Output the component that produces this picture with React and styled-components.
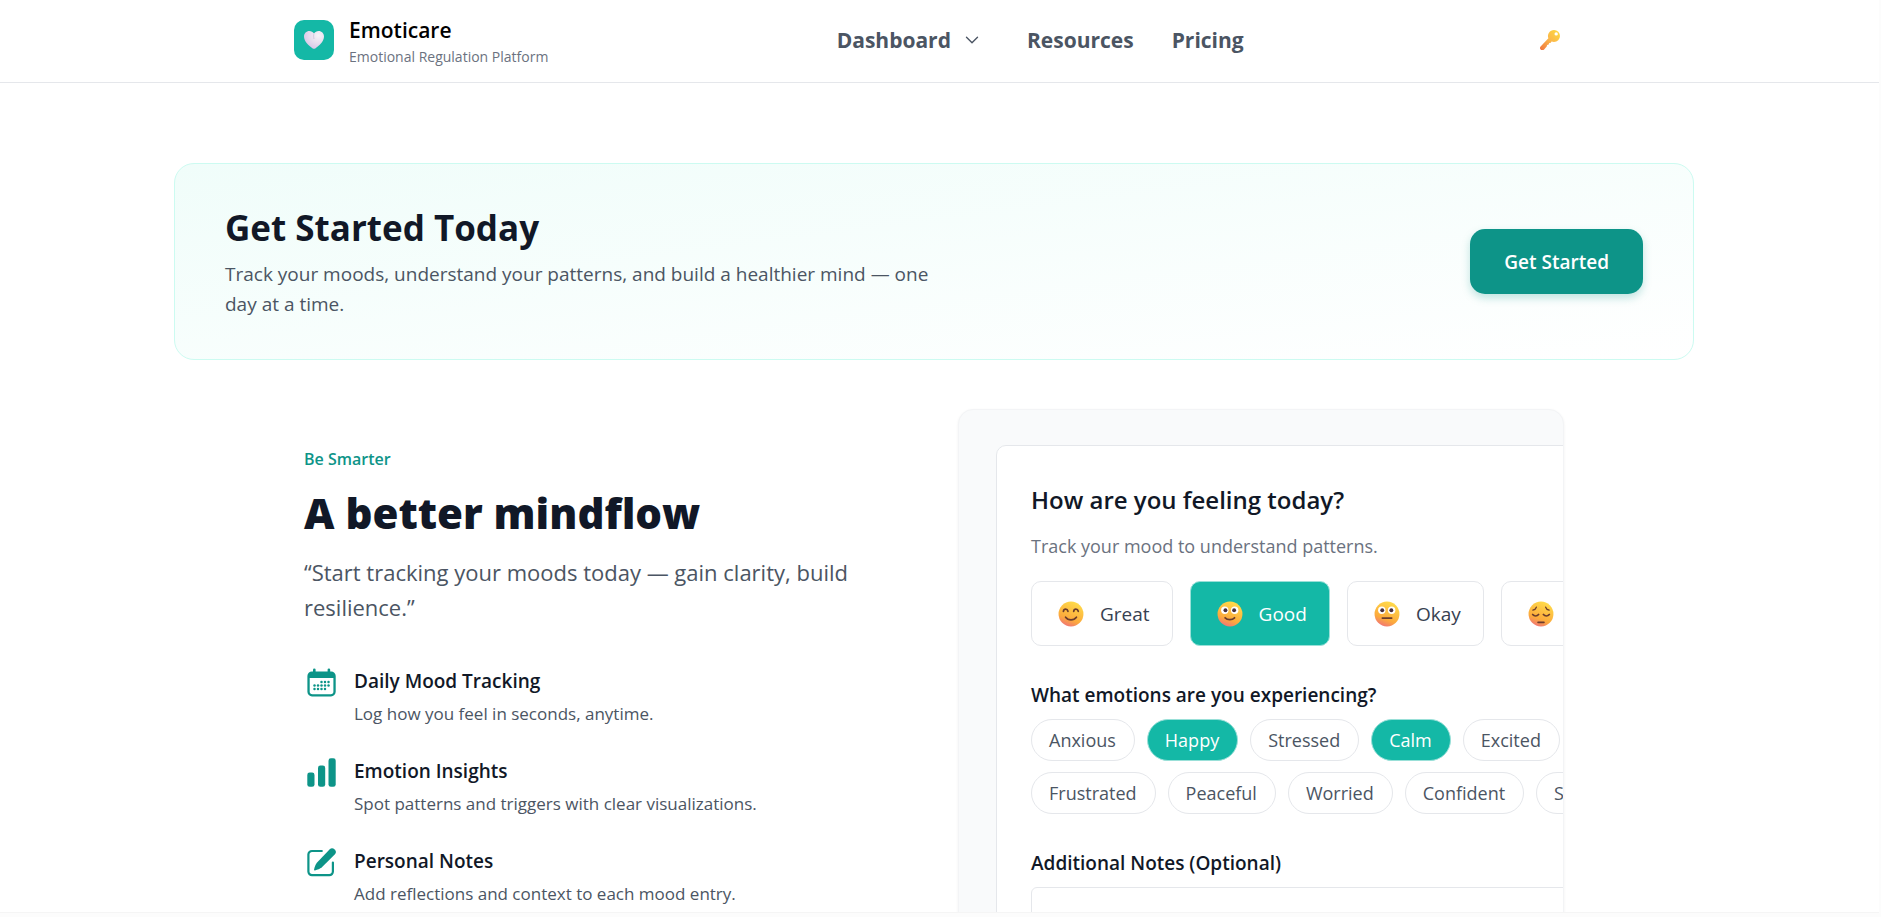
import React, { useState } from 'react'
import styled, { createGlobalStyle } from 'styled-components'
import { FiChevronDown } from 'react-icons/fi'

const GlobalStyle = createGlobalStyle`
    *, *::before, *::after {
        box-sizing: border-box;
    }

    body {
        margin: 0;
        background: #fcfcfc;
        color: #111827;
        font-family: "Open Sans", "Noto Sans", sans-serif;
        font-size: 19px;
    }

    h1, h2, h3, p, ul {
        margin: 0;
        padding: 0;
    }

    button, textarea {
        font: inherit;
        color: inherit;
    }
`;

const Page = styled.div`
    height: 100vh;
    padding: 0 2px 4px 0;
    background: #fcfcfc;
`;

const Scroller = styled.div`
    height: 100%;
    overflow: hidden;
    border-bottom: 1px solid #f5f5f5;
    background: #ffffff;
`;

const Header = styled.header`
    height: 83px;
    padding: 0 11px 2px 0;
    border-bottom: 1px solid #e5e7eb;
`;

const HeaderInner = styled.div`
    display: flex;
    align-items: center;
    justify-content: space-between;
    max-width: 1280px;
    height: 100%;
    margin: 0 auto;
`;

const Brand = styled.a`
    display: flex;
    align-items: center;
    gap: 15px;
    color: #000000;
    text-decoration: none;
`;

const LogoTile = styled.span`
    display: flex;
    align-items: center;
    justify-content: center;
    width: 40px;
    height: 40px;
    border-radius: 10px;
    background: #14b8a6;
`;

const BrandName = styled.span`
    display: block;
    font-size: 21px;
    font-weight: 600;
    line-height: 34px;
`;

const BrandTagline = styled.span`
    display: block;
    color: #6b7280;
    font-size: 14px;
    line-height: 20px;
`;

const Nav = styled.nav`
    display: flex;
    align-items: center;
    gap: 38px;
`;

const NavLink = styled.a`
    color: #4b5563;
    font-size: 21px;
    font-weight: 700;
    text-decoration: none;
`;

const NavButton = styled.button`
    display: flex;
    align-items: center;
    gap: 10px;
    padding: 0 6px 0 0;
    border: 0;
    background: none;
    color: #4b5563;
    font-size: 21px;
    font-weight: 700;
    cursor: pointer;
`;

const KeyButton = styled.button`
    display: flex;
    padding: 0 14px 0 8px;
    border: 0;
    background: none;
    cursor: pointer;
`;

const Main = styled.main`
    padding: 80px 11px 0 0;
`;

const Banner = styled.section`
    display: flex;
    align-items: center;
    justify-content: space-between;
    max-width: 1520px;
    margin: 0 auto;
    padding: 40px 50px;
    border: 1px solid #ccfbf1;
    border-radius: 20px;
    background: linear-gradient(to bottom right, #f0fdfa, #ffffff);
`;

const BannerTitle = styled.h1`
    font-size: 35px;
    font-weight: 700;
    line-height: 48px;
`;

const BannerText = styled.p`
    max-width: 720px;
    margin-top: 7px;
    color: #4b5563;
    font-size: 19px;
    line-height: 30px;
`;

const BannerButton = styled.button`
    padding: 19px 34px 17px;
    border: 0;
    border-radius: 15px;
    background: #0d9488;
    box-shadow: 0 4px 8px rgba(13, 148, 136, 0.25);
    color: #ffffff;
    font-weight: 600;
    line-height: 29px;
    cursor: pointer;
`;

const Features = styled.section`
    display: grid;
    grid-template-columns: 1fr 1fr;
    gap: 48px;
    max-width: 1260px;
    margin: 49px auto 0;
`;

const Intro = styled.div`
    padding-top: 35px;
`;

const Eyebrow = styled.p`
    color: #0d9488;
    font-size: 16px;
    font-weight: 600;
    line-height: 30px;
`;

const IntroTitle = styled.h2`
    margin-top: 9px;
    font-size: 42px;
    font-weight: 800;
    line-height: 60px;
`;

const Quote = styled.p`
    margin-top: 12px;
    color: #4b5563;
    font-size: 22px;
    line-height: 35px;
`;

const FeatureList = styled.ul`
    display: grid;
    gap: 25px;
    margin-top: 40px;
    list-style: none;
`;

const FeatureItem = styled.li`
    display: flex;
    gap: 17px;
    padding-left: 3px;

    svg {
        flex: none;
        margin-top: 3px;
    }
`;

const FeatureTitle = styled.h3`
    font-size: 19px;
    font-weight: 600;
    line-height: 33px;
`;

const FeatureText = styled.p`
    color: #4b5563;
    font-size: 17px;
    line-height: 32px;
`;

const Preview = styled.div`
    overflow: hidden;
    padding: 35px 0 0 37px;
    border: 1px solid #f3f4f6;
    border-radius: 15px;
    background: #f9fafb;
    box-shadow: 0 1px 3px rgba(0, 0, 0, 0.06);
`;

const MoodCard = styled.div`
    width: 800px;
    padding: 34px;
    border: 1px solid #e5e7eb;
    border-radius: 10px;
    background: #ffffff;
`;

const CardTitle = styled.h2`
    font-size: 24px;
    font-weight: 600;
    line-height: 40px;
`;

const CardText = styled.p`
    margin-top: 9px;
    color: #6b7280;
    font-size: 18px;
    line-height: 34px;
`;

const MoodRow = styled.div`
    display: flex;
    gap: 17px;
    margin-top: 18px;
`;

const MoodButton = styled.button`
    display: flex;
    align-items: center;
    gap: 16px;
    height: 65px;
    padding: 0 22px 0 26px;
    border: 1px solid ${({ $active }) => ($active ? '#99e0d8' : '#e5e7eb')};
    border-radius: 10px;
    background: ${({ $active }) => ($active ? '#14b8a6' : '#ffffff')};
    color: ${({ $active }) => ($active ? '#ffffff' : '#374151')};
    font-size: 19px;
    cursor: pointer;
`;

const GroupTitle = styled.h3`
    margin: 32px 0 7px;
    font-size: 19px;
    font-weight: 600;
    line-height: 34px;
`;

const ChipRow = styled.div`
    display: flex;
    gap: 12px;
    margin-bottom: 11px;
`;

const Chip = styled.button`
    height: 42px;
    padding: 0 18px 0 17px;
    border: 1px solid ${({ $active }) => ($active ? '#99e0d8' : '#e5e7eb')};
    border-radius: 21px;
    background: ${({ $active }) => ($active ? '#14b8a6' : '#ffffff')};
    color: ${({ $active }) => ($active ? '#ffffff' : '#4b5563')};
    font-size: 18px;
    cursor: pointer;
`;

const NotesLabel = styled.label`
    display: block;
    margin: 32px 0 7px;
    font-weight: 600;
    line-height: 34px;
`;

const NotesBox = styled.textarea`
    display: block;
    width: 100%;
    height: 120px;
    padding: 12px;
    border: 1px solid #e5e7eb;
    border-radius: 6px;
    resize: none;
`;

const emotionRows = [
    ['Anxious', 'Happy', 'Stressed', 'Calm', 'Excited'],
    ['Frustrated', 'Peaceful', 'Worried', 'Confident', 'Sad'],
]

const moods = ['Great', 'Good', 'Okay', 'Low']

const HeartIcon = () => (
    <svg width="20" height="18" viewBox="0 0 20 18" aria-hidden="true">
        <defs>
            <radialGradient id="heart" cx="0.72" cy="0.25" r="0.9">
                <stop offset="0" stopColor="#f6f3f8" />
                <stop offset="0.5" stopColor="#e6dcee" />
                <stop offset="1" stopColor="#d3bfe6" />
            </radialGradient>
        </defs>
        <path
            d="M10 2.6C8.9.9 7.3 0 5.4 0 2.3 0 0 2.4 0 5.5c0 4.7 4.7 9.3 8.7 11.9.8.6 1.8.6 2.6 0C15.3 14.8 20 10.2 20 5.5 20 2.4 17.7 0 14.6 0 12.7 0 11.1.9 10 2.6Z"
            fill="url(#heart)"
        />
        <path d="M10 2.6C9.5 4 9.5 6 10 8" stroke="#cdbfd8" strokeWidth="0.8" fill="none" />
    </svg>
)

const KeyIcon = () => (
    <svg width="20" height="20" viewBox="0 0 20 20" aria-hidden="true">
        <defs>
            <linearGradient id="key" x1="1" y1="0" x2="0" y2="1">
                <stop offset="0" stopColor="#fddc3f" />
                <stop offset="0.5" stopColor="#fbb74a" />
                <stop offset="1" stopColor="#f0733f" />
            </linearGradient>
        </defs>
        <path
            fillRule="evenodd"
            d="M14 0a6 6 0 0 1 0 12c-.9 0-1.7-.1-2.4-.4L10.400 13H9.200l-.5 1.600-1.600.4-.4 1.600-2.600 2.800a2.300 2.300 0 0 1-3.500-3L8.400 8.300A6 6 0 0 1 14 0Zm2.200 2.200a1.700 1.700 0 1 0 0 3.400 1.700 1.700 0 0 0 0-3.400Z"
            fill="url(#key)"
        />
    </svg>
)

const CalendarIcon = () => (
    <svg width="30" height="30" viewBox="0 0 30 30" fill="#0d9488" aria-hidden="true">
        <rect x="6" y="0.5" width="2.6" height="6" rx="1.3" />
        <rect x="20.6" y="0.5" width="2.6" height="6" rx="1.3" />
        <path
            fillRule="evenodd"
            d="M5 3.5h19A4.500 4.500 0 0 1 28.700 8v15.800a4.700 4.700 0 0 1-4.700 4.700H5A4.700 4.700 0 0 1 .4 23.800V8A4.500 4.500 0 0 1 5 3.500ZM2.700 10v13.500A2.700 2.700 0 0 0 5.400 26.200h18.300a2.700 2.700 0 0 0 2.700-2.700V10Z"
        />
        {[[14.5, 14], [18, 14], [21.5, 14], [7.5, 17.5], [11, 17.5], [14.5, 17.5], [18, 17.5], [21.5, 17.5], [7.5, 21], [11, 21], [14.5, 21], [18, 21]].map(([x, y]) => (
            <circle key={`${x}-${y}`} cx={x} cy={y} r="1.25" />
        ))}
    </svg>
)

const BarsIcon = () => (
    <svg width="30" height="30" viewBox="0 0 30 30" fill="#0d9488" aria-hidden="true">
        <rect x="0.3" y="14.5" width="7.2" height="14.3" rx="2.4" />
        <rect x="11" y="7.5" width="7.2" height="21.3" rx="2.4" />
        <rect x="21.5" y="0.3" width="7.2" height="28.5" rx="2.4" />
    </svg>
)

const PencilIcon = () => (
    <svg width="30" height="30" viewBox="0 0 30 30" fill="none" aria-hidden="true">
        <path
            d="M14.8 3H5a3.600 3.600 0 0 0-3.600 3.600v17A3.600 3.600 0 0 0 5 27.200h17.300a3.600 3.600 0 0 0 3.600-3.600V14.500"
            stroke="#0d9488"
            strokeWidth="2.2"
            strokeLinecap="round"
        />
        <path
            d="M22.5 1.5a3.600 3.600 0 0 1 5.200 5.100L14.900 19.300c-2 1.700-4.300 2.500-7 3.100a.7.7 0 0 1-.8-.8c.5-2.700 1.400-5 3-7Z"
            fill="#0d9488"
        />
    </svg>
)

const faceFeatures = {
    Great: (
        <>
            <path d="M5 9.5c.4-2.600 3.600-2.600 4.200 0M14.500 9.500c.4-2.600 3.600-2.600 4.200 0" />
            <path d="M7 15c2.500 3.300 7.500 3.300 10 0" />
        </>
    ),
    Good: (
        <>
            <circle cx="7.2" cy="8.5" r="3.4" fill="#fff" stroke="none" />
            <circle cx="16.3" cy="8.5" r="3.4" fill="#fff" stroke="none" />
            <circle cx="7.8" cy="8.5" r="1.8" fill="#48303c" stroke="none" />
            <circle cx="15.8" cy="8.5" r="1.8" fill="#48303c" stroke="none" />
            <path d="M7.5 15.5c2.200 2.300 6.500 2.300 8.700 0" />
        </>
    ),
    Okay: (
        <>
            <circle cx="7.2" cy="8.5" r="3.4" fill="#fff" stroke="none" />
            <circle cx="16.3" cy="8.5" r="3.4" fill="#fff" stroke="none" />
            <circle cx="7.6" cy="8.5" r="1.8" fill="#48303c" stroke="none" />
            <circle cx="16" cy="8.5" r="1.8" fill="#48303c" stroke="none" />
            <path d="M7.7 15.8h8.6" />
        </>
    ),
    Low: (
        <>
            <path d="M4.5 8.5c1.700-.4 2.700-1.300 3.200-2.800M19.500 8.500c-1.700-.4-2.700-1.300-3.200-2.800" strokeWidth="1.2" />
            <path d="M4.3 12.5c1.500 1.800 4 1.800 5.500 0M14.200 12.500c1.500 1.800 4 1.800 5.500 0" />
            <path d="M9.3 19.7h5.4" />
        </>
    ),
}

const Face = ({ mood }) => (
    <svg width="26" height="26" viewBox="0 0 24 24" aria-hidden="true">
        <defs>
            <linearGradient id="face" x1="0.7" y1="0" x2="0.3" y2="1">
                <stop offset="0" stopColor="#ffdc4a" />
                <stop offset="0.7" stopColor="#fcaa3c" />
                <stop offset="1" stopColor="#f0727a" />
            </linearGradient>
        </defs>
        <circle cx="12" cy="12" r="11.5" fill="url(#face)" />
        <g fill="none" stroke="#6b3c2c" strokeWidth="1.6" strokeLinecap="round">
            {faceFeatures[mood]}
        </g>
    </svg>
)

const features = [
    { title: 'Daily Mood Tracking', text: 'Log how you feel in seconds, anytime.', icon: <CalendarIcon /> },
    { title: 'Emotion Insights', text: 'Spot patterns and triggers with clear visualizations.', icon: <BarsIcon /> },
    { title: 'Personal Notes', text: 'Add reflections and context to each mood entry.', icon: <PencilIcon /> },
]

function SiteHeader() {
    return (
        <Header>
            <HeaderInner>
                <Brand href="#">
                    <LogoTile>
                        <HeartIcon />
                    </LogoTile>
                    <span>
                        <BrandName>Emoticare</BrandName>
                        <BrandTagline>Emotional Regulation Platform</BrandTagline>
                    </span>
                </Brand>
                <Nav>
                    <NavButton type="button">
                        Dashboard
                        <FiChevronDown size={22} strokeWidth={1.5} />
                    </NavButton>
                    <NavLink href="#resources">Resources</NavLink>
                    <NavLink href="#pricing">Pricing</NavLink>
                </Nav>
                <KeyButton type="button" aria-label="Log in">
                    <KeyIcon />
                </KeyButton>
            </HeaderInner>
        </Header>
    )
}

function MoodPreview() {
    const [mood, setMood] = useState('Good')
    const [emotions, setEmotions] = useState(['Happy', 'Calm'])

    const toggleEmotion = (name) => {
        setEmotions(emotions.includes(name) ? emotions.filter((e) => e !== name) : [...emotions, name])
    }

    return (
        <Preview>
            <MoodCard>
                <CardTitle>How are you feeling today?</CardTitle>
                <CardText>Track your mood to understand patterns.</CardText>
                <MoodRow>
                    {moods.map((name) => (
                        <MoodButton key={name} type="button" $active={mood === name} onClick={() => setMood(name)}>
                            <Face mood={name} />
                            {name}
                        </MoodButton>
                    ))}
                </MoodRow>
                <GroupTitle>What emotions are you experiencing?</GroupTitle>
                {emotionRows.map((row) => (
                    <ChipRow key={row[0]}>
                        {row.map((name) => (
                            <Chip
                                key={name}
                                type="button"
                                $active={emotions.includes(name)}
                                onClick={() => toggleEmotion(name)}
                            >
                                {name}
                            </Chip>
                        ))}
                    </ChipRow>
                ))}
                <NotesLabel htmlFor="notes">Additional Notes (Optional)</NotesLabel>
                <NotesBox id="notes" />
            </MoodCard>
        </Preview>
    )
}

function App() {
    return (
        <>
            <GlobalStyle />
            <Page>
                <Scroller>
                    <SiteHeader />
                    <Main>
                        <Banner>
                            <div>
                                <BannerTitle>Get Started Today</BannerTitle>
                                <BannerText>
                                    Track your moods, understand your patterns, and build a healthier mind — one day at a time.
                                </BannerText>
                            </div>
                            <BannerButton type="button">Get Started</BannerButton>
                        </Banner>
                        <Features>
                            <Intro>
                                <Eyebrow>Be Smarter</Eyebrow>
                                <IntroTitle>A better mindflow</IntroTitle>
                                <Quote>“Start tracking your moods today — gain clarity, build resilience.”</Quote>
                                <FeatureList>
                                    {features.map((item) => (
                                        <FeatureItem key={item.title}>
                                            {item.icon}
                                            <div>
                                                <FeatureTitle>{item.title}</FeatureTitle>
                                                <FeatureText>{item.text}</FeatureText>
                                            </div>
                                        </FeatureItem>
                                    ))}
                                </FeatureList>
                            </Intro>
                            <MoodPreview />
                        </Features>
                    </Main>
                </Scroller>
            </Page>
        </>
    )
}

export default App
